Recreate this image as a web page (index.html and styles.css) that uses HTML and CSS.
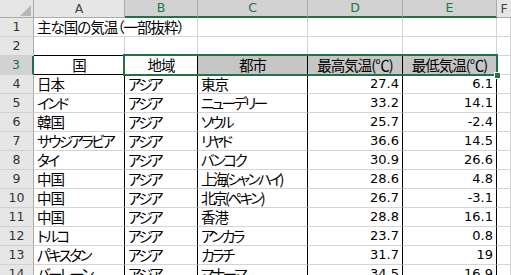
FILE: index.html
```html
<!DOCTYPE html>
<html lang="ja">
<head>
<meta charset="utf-8">
<title>主な国の気温</title>
<link rel="stylesheet" href="styles.css">
</head>
<body>
<div class="sheet">
  <div class="c hd corner"><svg class="tri" width="33" height="17" viewBox="0 0 33 17"><polygon points="31,5 31,16 20,16" fill="#b7b7b7"/></svg></div>
  <div class="c hd">A</div>
  <div class="c hd sel-h">B</div>
  <div class="c hd sel-h">C</div>
  <div class="c hd sel-h">D</div>
  <div class="c hd sel-h">E</div>
  <div class="c hd last">F</div>

  <div class="c rh">1</div>
  <div class="c title">主な国の気温（一部抜粋）</div>
  <div class="c"></div><div class="c"></div><div class="c"></div><div class="c"></div>

  <div class="c rh">2</div>
  <div class="c top"></div><div class="c top"></div><div class="c top"></div><div class="c top"></div><div class="c top"></div><div class="c"></div>

  <div class="c rh sel-r">3</div>
  <div class="c t th">国</div>
  <div class="c t th">地域</div>
  <div class="c t th shade">都市</div>
  <div class="c t th shade">最高気温(℃)</div>
  <div class="c t th shade">最低気温(℃)</div>
  <div class="c"></div>

  <div class="c rh">4</div>
  <div class="c t">日本</div><div class="c t kana">アジア</div><div class="c t">東京</div><div class="c t n">27.4</div><div class="c t n">6.1</div><div class="c"></div>

  <div class="c rh">5</div>
  <div class="c t kana">インド</div><div class="c t kana">アジア</div><div class="c t kana">ニューデリー</div><div class="c t n">33.2</div><div class="c t n">14.1</div><div class="c"></div>

  <div class="c rh">6</div>
  <div class="c t">韓国</div><div class="c t kana">アジア</div><div class="c t kana">ソウル</div><div class="c t n">25.7</div><div class="c t n">-2.4</div><div class="c"></div>

  <div class="c rh">7</div>
  <div class="c t kana">サウジアラビア</div><div class="c t kana">アジア</div><div class="c t kana">リヤド</div><div class="c t n">36.6</div><div class="c t n">14.5</div><div class="c"></div>

  <div class="c rh">8</div>
  <div class="c t kana">タイ</div><div class="c t kana">アジア</div><div class="c t kana">バンコク</div><div class="c t n">30.9</div><div class="c t n">26.6</div><div class="c"></div>

  <div class="c rh">9</div>
  <div class="c t">中国</div><div class="c t kana">アジア</div><div class="c t kana">上海(シャンハイ)</div><div class="c t n">28.6</div><div class="c t n">4.8</div><div class="c"></div>

  <div class="c rh">10</div>
  <div class="c t">中国</div><div class="c t kana">アジア</div><div class="c t kana">北京(ペキン)</div><div class="c t n">26.7</div><div class="c t n">-3.1</div><div class="c"></div>

  <div class="c rh">11</div>
  <div class="c t">中国</div><div class="c t kana">アジア</div><div class="c t">香港</div><div class="c t n">28.8</div><div class="c t n">16.1</div><div class="c"></div>

  <div class="c rh">12</div>
  <div class="c t kana">トルコ</div><div class="c t kana">アジア</div><div class="c t kana">アンカラ</div><div class="c t n">23.7</div><div class="c t n">0.8</div><div class="c"></div>

  <div class="c rh">13</div>
  <div class="c t kana">パキスタン</div><div class="c t kana">アジア</div><div class="c t kana">カラチ</div><div class="c t n">31.7</div><div class="c t n">19</div><div class="c"></div>

  <div class="c rh">14</div>
  <div class="c t kana">バーレーン</div><div class="c t kana">アジア</div><div class="c t kana">マナーマ</div><div class="c t n">34.5</div><div class="c t n">16.9</div><div class="c"></div>

  <div class="selection"><div class="handle"></div></div>
</div>
</body>
</html>
```
FILE: styles.css
```css
html, body {
  margin: 0;
  padding: 0;
  background: #ffffff;
  overflow: hidden;
}

.sheet {
  position: relative;
  display: grid;
  grid-template-columns: 34px 91px 73px 110px 95px 94px 1fr;
  grid-template-rows: 18px repeat(14, 19px);
  width: 511px;
  height: 275px;
  overflow: hidden;
}

.c {
  box-sizing: border-box;
  border-right: 1px solid #d4d4d4;
  border-bottom: 1px solid #d4d4d4;
  padding: 0 3px;
  font-family: "Noto Sans CJK JP", "Noto Sans", sans-serif;
  font-feature-settings: "palt";
  font-size: 14.5px;
  letter-spacing: -1px;
  line-height: 18px;
  color: #000000;
  white-space: nowrap;
}

.kana {
  letter-spacing: -2.5px;
}

.hd {
  background: #e6e6e6;
  border-right: 1px solid #ababab;
  border-bottom: 1px solid #ababab;
  font-family: "DejaVu Sans", "Liberation Sans", sans-serif;
  font-size: 12.5px;
  letter-spacing: 0;
  line-height: 17px;
  color: #444444;
  text-align: center;
}

.last {
  padding: 0;
  border-right: none;
}

.corner {
  padding: 0;
}

.tri {
  display: block;
}

.sel-h {
  background: #d2d2d2;
  color: #217346;
  border-bottom: 2px solid #217346;
  line-height: 16px;
}

.rh {
  background: #e6e6e6;
  border-right: 1px solid #ababab;
  border-bottom: 1px solid #d0d0d0;
  font-family: "DejaVu Sans", "Liberation Sans", sans-serif;
  font-size: 12.5px;
  letter-spacing: 0;
  color: #333333;
  text-align: center;
  padding: 0;
}

.sel-r {
  background: #d2d2d2;
  color: #217346;
  border-right: 2px solid #217346;
}

.title {
  grid-column: span 2;
}

.top {
  border-bottom: 1px solid #000000;
}

.t {
  border-right: 1px solid #000000;
}

.th {
  border-bottom: 1px solid #000000;
  text-align: center;
}

.shade {
  background: #c6c6c6;
}

.n {
  text-align: right;
  font-family: "DejaVu Sans", "Liberation Sans", sans-serif;
  font-size: 13px;
  letter-spacing: 0;
  padding-right: 3px;
}

.selection {
  position: absolute;
  left: 123px;
  top: 54px;
  width: 375px;
  height: 22px;
  box-sizing: border-box;
  border: 2px solid #217346;
  pointer-events: none;
}

.handle {
  position: absolute;
  right: -5px;
  bottom: -5px;
  width: 5px;
  height: 5px;
  background: #217346;
  border: 1px solid #ffffff;
}
```
